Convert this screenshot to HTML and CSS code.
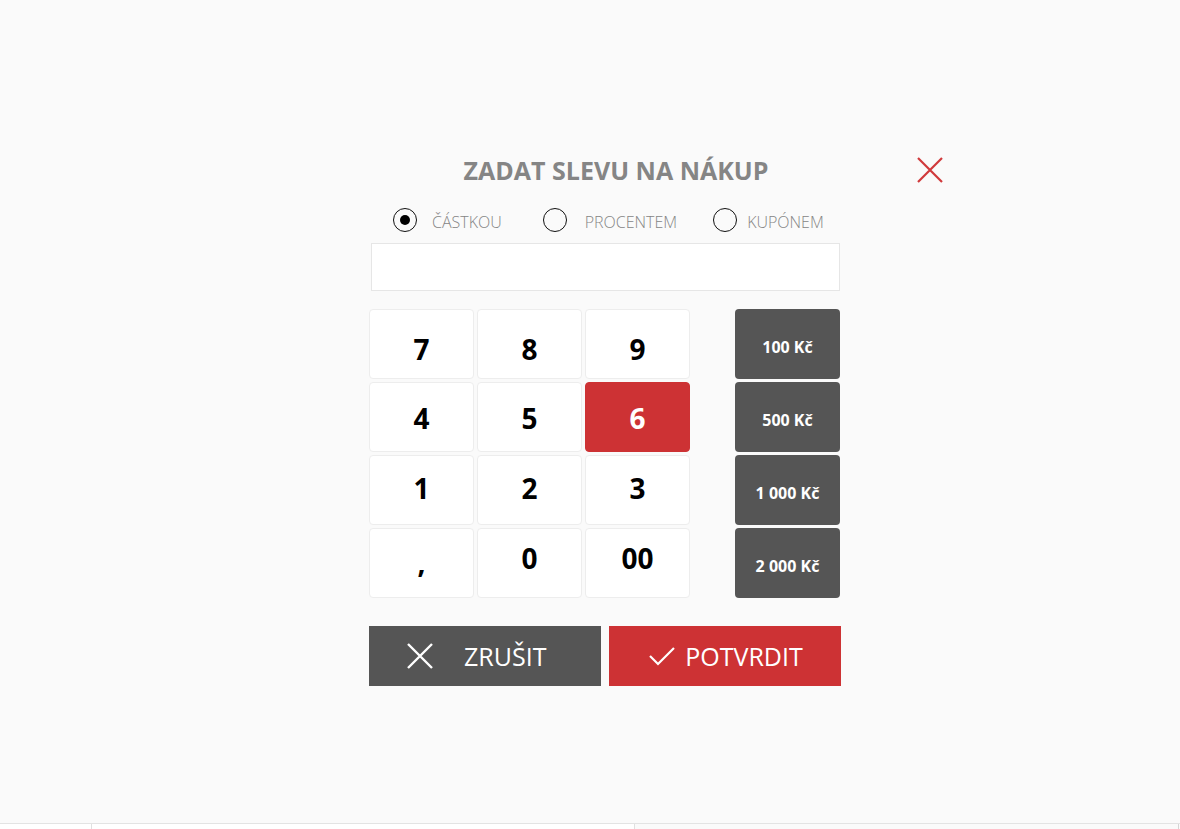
FILE: index.html
```html
<!DOCTYPE html>
<html lang="cs">
<head>
  <meta charset="UTF-8" />
  <meta name="viewport" content="width=device-width, initial-scale=1.0" />
  <title>Sleva na nákup</title>
  <link rel="stylesheet" href="styles.css">
</head>
<body>
  <div class="screen">
    <div class="dialog">
      <div class="dialog-head">
        <h1 class="title">ZADAT SLEVU NA NÁKUP</h1>
        <button class="close" aria-label="Zavřít">
          <svg width="26" height="26" viewBox="0 0 26 26"><path d="M1 1 L25 25 M25 1 L1 25" stroke="#d0393b" stroke-width="2.2" fill="none"/></svg>
        </button>
      </div>

      <div class="modes">
        <label class="mode"><span class="radio checked"></span><span class="mode-label">ČÁSTKOU</span></label>
        <label class="mode mode-2"><span class="radio"></span><span class="mode-label">PROCENTEM</span></label>
        <label class="mode mode-3"><span class="radio"></span><span class="mode-label">KUPÓNEM</span></label>
      </div>

      <input class="amount" type="text" value="">

      <div class="pad">
        <div class="keys">
          <button class="key row-1">7</button>
          <button class="key row-1">8</button>
          <button class="key row-1">9</button>
          <button class="key row-2">4</button>
          <button class="key row-2">5</button>
          <button class="key row-2 active">6</button>
          <button class="key row-3">1</button>
          <button class="key row-3">2</button>
          <button class="key row-3">3</button>
          <button class="key row-4 comma">,</button>
          <button class="key row-4">0</button>
          <button class="key row-4">00</button>
        </div>
        <div class="presets">
          <button class="preset">100 Kč</button>
          <button class="preset">500 Kč</button>
          <button class="preset">1 000 Kč</button>
          <button class="preset">2 000 Kč</button>
        </div>
      </div>

      <div class="actions">
        <button class="action cancel">
          <svg width="26" height="26" viewBox="0 0 26 26"><path d="M1 1 L25 25 M25 1 L1 25" stroke="#fff" stroke-width="2.4" fill="none"/></svg>
          <span>ZRUŠIT</span>
        </button>
        <button class="action confirm">
          <svg width="26" height="20" viewBox="0 0 26 20"><path d="M1 10 L9 18 L25 2" stroke="#fff" stroke-width="2.2" fill="none"/></svg>
          <span>POTVRDIT</span>
        </button>
      </div>
    </div>
  </div>

  <div class="footer">
    <div class="cell cell-a"></div>
    <div class="cell cell-b"></div>
    <div class="cell cell-c"></div>
  </div>
</body>
</html>
```

FILE: styles.css
```css
body {
  margin: 0;
  background: #fafafa;
  font-family: "Open Sans", "Liberation Sans", sans-serif;
  height: 829px;
  overflow: hidden;
}
button {
  font-family: inherit;
  border: none;
  outline: none;
  cursor: pointer;
  padding: 0;
}
.screen {
  height: 823px;
  padding-left: 369px;
  box-sizing: border-box;
}
.dialog {
  width: 472px;
  padding-top: 152px;
  display: flex;
  flex-direction: column;
}
.dialog-head {
  display: flex;
  align-items: center;
  width: 574px;
  height: 36px;
}
.title {
  margin: 0;
  width: 494px;
  text-align: center;
  font-size: 25px;
  font-weight: 700;
  color: #858585;
  line-height: 36px;
}
.close {
  margin-left: 54px;
  background: none;
  width: 26px;
  height: 26px;
  display: flex;
}
.modes {
  display: flex;
  align-items: center;
  margin-top: 19px;
  padding-left: 24px;
  height: 26px;
}
.mode {
  display: flex;
  align-items: center;
  gap: 15px;
}
.mode-2 { margin-left: 41px; }
.mode-2 .mode-label { margin-left: 3px; }
.mode-3 { margin-left: 36px; gap: 10px; }
.radio {
  width: 22px;
  height: 22px;
  border: 1.5px solid #111;
  border-radius: 50%;
  display: flex;
  align-items: center;
  justify-content: center;
}
.radio.checked::after {
  content: "";
  width: 10px;
  height: 10px;
  border-radius: 50%;
  background: #000;
}
.mode-label {
  font-size: 16px;
  font-weight: 300;
  color: #858585;
  padding-top: 4px;
}
.amount {
  margin: 10px 0 0 2px;
  width: 469px;
  height: 48px;
  box-sizing: border-box;
  border: 1px solid #e6e6e6;
  background: #fff;
  outline: none;
}
.pad {
  display: flex;
  margin-top: 18px;
}
.keys {
  display: grid;
  grid-template-columns: repeat(3, 105px);
  grid-auto-rows: 70px;
  gap: 3px;
}
.key {
  background: #fff;
  border: 1px solid #ededed;
  border-radius: 4px;
  font-size: 28px;
  font-weight: 700;
  color: #000;
}
/* labels sit a little off-centre, drifting upward row by row */
.key.row-1 { padding-top: 9px; }
.key.row-2 { padding-top: 2px; }
.key.row-3 { padding-bottom: 5px; }
.key.row-4 { padding-bottom: 11px; }
.key.row-4.comma { padding-bottom: 3px; }
.key.active {
  background: #cd3234;
  border-color: #cd3234;
  color: #fff;
}
.presets {
  margin-left: 45px;
  display: grid;
  grid-auto-rows: 70px;
  gap: 3px;
}
.preset {
  width: 105px;
  background: #555;
  border-radius: 4px;
  color: #fff;
  font-size: 16px;
  font-weight: 700;
  padding-top: 5px;
}
.actions {
  display: flex;
  gap: 8px;
  margin-top: 28px;
}
.action {
  width: 232px;
  height: 60px;
  color: #fff;
  font-size: 25px;
  display: flex;
  align-items: center;
}
.cancel {
  background: #555;
  gap: 31px;
  padding-left: 38px;
}
.confirm {
  background: #cd3234;
  gap: 10px;
  justify-content: center;
  padding-left: 2px;
}
.footer {
  display: flex;
  height: 6px;
  border-top: 1px solid #e3e3e3;
}
.cell {
  background: #fff;
  border-right: 1px solid #e0e0e0;
}
.cell-a { width: 91px; }
.cell-b { width: 542px; }
.cell-c { width: 543px; background: #fafafa; border-right-color: #d5d5d5; }
```
